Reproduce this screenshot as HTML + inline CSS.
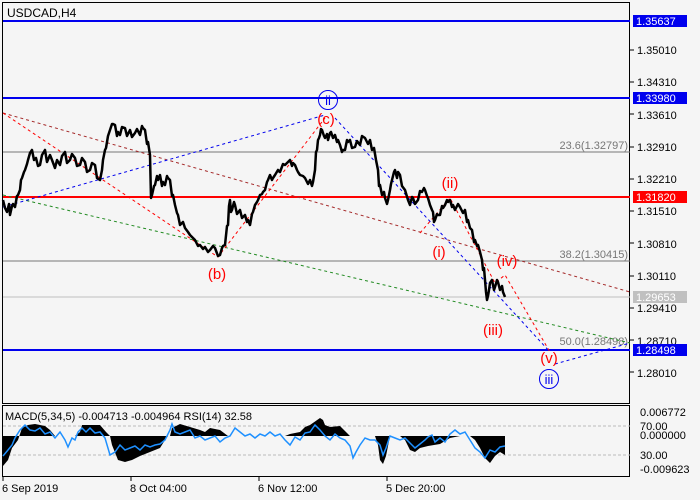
<!DOCTYPE html>
<html><head><meta charset="utf-8"><style>
html,body{margin:0;padding:0;background:#f5f5f5;width:700px;height:500px;overflow:hidden}
svg{display:block;font-family:"Liberation Sans",sans-serif}
</style></head><body>
<svg width="700" height="500" viewBox="0 0 700 500">
<rect x="0" y="0" width="700" height="500" fill="#f5f5f5"/>
<rect x="2.5" y="2.5" width="627" height="401" fill="#f5f5f5" stroke="#000" stroke-width="1"/>
<rect x="2.5" y="405.5" width="627" height="71" fill="#f5f5f5" stroke="#000" stroke-width="1"/>
<text x="7" y="17" font-size="12" fill="#000">USDCAD,H4</text>

<line x1="3" y1="21" x2="630" y2="21" stroke="#0000ee" stroke-width="2"/>
<line x1="3" y1="98" x2="630" y2="98" stroke="#0000ee" stroke-width="2"/>
<line x1="3" y1="152" x2="630" y2="152" stroke="#777" stroke-width="1"/>
<line x1="3" y1="197" x2="630" y2="197" stroke="#ff0000" stroke-width="2"/>
<line x1="3" y1="261" x2="630" y2="261" stroke="#777" stroke-width="1"/>
<line x1="3" y1="297" x2="630" y2="297" stroke="#c0c0c0" stroke-width="1"/>
<line x1="3" y1="350" x2="630" y2="350" stroke="#0000ee" stroke-width="2"/>
<text x="628" y="149" font-size="11" fill="#777" text-anchor="end">23.6(1.32797)</text>
<text x="628" y="258" font-size="11" fill="#777" text-anchor="end">38.2(1.30415)</text>
<text x="628" y="345" font-size="11" fill="#777" text-anchor="end">50.0(1.28498)</text>

<g fill="none" stroke-width="1" stroke-dasharray="3,3">
<polyline points="3,113 630,292" stroke="#a52a2a"/>
<polyline points="3,195 630,343" stroke="#228b22"/>
<polyline points="3,207 325,115" stroke="#0000ee"/>
<polyline points="335,118 550,352" stroke="#0000ee"/>
<polyline points="555,364 630,343" stroke="#0000ee"/>
<polyline points="3,113 218,257 325,118" stroke="#ff0000"/>
<polyline points="420,233 450,198 495,283 505,275 550,352" stroke="#ff0000"/>
</g>

<polyline fill="none" stroke="#000" stroke-width="2.5" stroke-linejoin="round" points="3,200 5,208 7,212 9,204 10,215 12,206 13,204 15,207 17,196 18,195 20,190 21,180 22,178 24,172 25,170 27,164 28,160 30,153 32,150 34,160 36,158 38,166 40,165 42,155 45,150 47,162 50,155 52,160 55,168 57,160 60,165 62,156 65,152 67,163 70,160 72,154 75,158 77,166 80,165 82,158 85,162 87,172 90,170 92,163 95,165 97,178 100,180 102,170 103,160 105,150 106,148 108,136 110,130 112,124 113,124 115,125 117,136 118,132 120,135 122,127 125,128 127,136 130,130 132,137 135,133 137,129 140,135 142,126 143,128 145,130 147,144 148,142 150,155 151,198 152,195 154,186 155,185 157,176 158,180 160,175 162,186 163,182 165,185 167,176 168,178 170,180 172,196 173,195 175,205 177,213 178,215 180,225 183,222 185,228 188,232 190,235 193,238 195,240 198,246 200,245 203,249 205,247 208,252 210,250 213,246 215,248 218,256 220,255 222,248 223,246 225,245 227,226 228,225 229,206 230,200 231,212 232,210 234,202 235,205 237,214 240,210 242,218 245,215 247,222 248,220 250,225 252,214 253,212 255,205 257,202 258,200 260,195 262,194 263,192 265,190 267,182 268,180 270,175 272,180 273,178 275,175 278,170 280,172 283,164 285,165 288,162 290,160 292,166 293,163 295,165 297,170 298,172 300,175 303,176 305,178 308,184 310,180 312,186 313,182 315,170 316,152 317,150 318,140 319,138 320,135 321,129 322,130 324,136 325,138 327,134 328,140 330,133 331,132 333,138 335,135 337,142 338,140 340,145 342,152 343,150 345,150 347,140 348,142 350,140 352,148 355,147 357,141 360,145 362,136 365,138 368,144 370,140 372,150 374,148 376,160 378,170 379,186 380,185 382,195 384,192 385,198 387,204 388,200 390,190 391,184 392,180 394,172 395,170 397,178 398,172 400,175 402,186 405,190 408,200 410,205 412,197 413,198 415,204 418,200 420,191 422,192 424,188 425,190 427,196 428,198 430,205 432,210 433,212 434,222 435,220 437,214 438,215 440,215 442,206 443,208 445,205 447,200 448,202 450,200 452,207 453,205 455,210 458,204 460,207 463,213 465,210 467,222 468,220 470,228 472,230 474,242 475,240 477,246 478,245 480,252 481,256 482,260 483,270 484,268 485,280 486,292 487,300 488,296 489,290 490,283 492,280 494,290 495,287 497,280 498,282 500,290 502,286 503,292 505,297"/>

<g font-size="15" fill="#ff0000" text-anchor="middle">
<text x="217" y="279">(b)</text>
<text x="326" y="124">(c)</text>
<text x="450" y="188">(ii)</text>
<text x="439" y="257">(i)</text>
<text x="507" y="266">(iv)</text>
<text x="493" y="335">(iii)</text>
<text x="549" y="363">(v)</text>
</g>
<circle cx="328" cy="100" r="9.5" fill="none" stroke="#0000ee" stroke-width="1"/>
<text x="328" y="105" font-size="13" fill="#0000ee" text-anchor="middle">ii</text>
<circle cx="549" cy="379" r="9.5" fill="none" stroke="#0000ee" stroke-width="1"/>
<text x="549" y="384" font-size="13" fill="#0000ee" text-anchor="middle">iii</text>

<g font-size="11" fill="#000">
<line x1="630" y1="50" x2="634" y2="50" stroke="#000"/><text x="637" y="54">1.35010</text>
<line x1="630" y1="82" x2="634" y2="82" stroke="#000"/><text x="637" y="86">1.34310</text>
<line x1="630" y1="114" x2="634" y2="114" stroke="#000"/><text x="637" y="119">1.33610</text>
<line x1="630" y1="147" x2="634" y2="147" stroke="#000"/><text x="637" y="151">1.32910</text>
<line x1="630" y1="179" x2="634" y2="179" stroke="#000"/><text x="637" y="183">1.32210</text>
<line x1="630" y1="211" x2="634" y2="211" stroke="#000"/><text x="637" y="215">1.31510</text>
<line x1="630" y1="243" x2="634" y2="243" stroke="#000"/><text x="637" y="248">1.30810</text>
<line x1="630" y1="276" x2="634" y2="276" stroke="#000"/><text x="637" y="280">1.30110</text>
<line x1="630" y1="308" x2="634" y2="308" stroke="#000"/><text x="637" y="312">1.29410</text>
<line x1="630" y1="340" x2="634" y2="340" stroke="#000"/><text x="637" y="345">1.28710</text>
<line x1="630" y1="372" x2="634" y2="372" stroke="#000"/><text x="637" y="377">1.28010</text>
</g>
<g font-size="11" fill="#fff">
<rect x="633" y="15" width="54" height="12" fill="#0000ee"/><text x="636" y="25">1.35637</text>
<rect x="633" y="92" width="54" height="12" fill="#0000ee"/><text x="636" y="102">1.33980</text>
<rect x="633" y="191" width="54" height="12" fill="#ff0000"/><text x="636" y="201">1.31820</text>
<rect x="633" y="291" width="54" height="12" fill="#c0c0c0"/><text x="636" y="301">1.29653</text>
<rect x="633" y="344" width="54" height="12" fill="#0000ee"/><text x="636" y="354">1.28498</text>
</g>

<line x1="3" y1="426" x2="630" y2="426" stroke="#bbb" stroke-dasharray="3,2"/>
<line x1="3" y1="455" x2="630" y2="455" stroke="#bbb" stroke-dasharray="3,2"/>
<polygon fill="#000" points="3,436 3,466 8,460 12,448 18,440 22,428 28,425 35,424 45,426 50,430 55,436 60,436 75,436 80,432 82,425 100,425 106,432 110,436 112,445 118,460 125,462 132,460 140,456 150,452 160,448 165,440 168,436 170,436 172,428 180,424 200,430 205,432 210,428 220,430 228,436 240,436 245,436 248,436 250,436 255,436 260,436 268,436 270,436 278,436 285,436 290,434 300,432 305,427 310,425 320,418 323,420 325,425 330,427 340,426 347,433 350,436 360,436 365,436 370,436 375,436 378,445 380,460 383,464 386,456 390,436 392,436 396,436 400,436 405,440 410,450 415,452 420,448 428,446 440,444 450,438 460,436 470,436 475,440 480,448 485,458 490,463 495,456 500,452 505,455 505,436 3,436"/>
<polyline fill="none" stroke="#1e90ff" stroke-width="1.5" points="3,456 8,450 12,445 15,438 20,430 25,425 30,430 35,431 40,428 45,434 50,432 55,438 60,432 65,440 68,447 72,438 75,440 78,432 82,428 86,432 90,428 95,433 100,432 105,438 110,455 115,452 120,445 125,450 130,448 135,446 140,450 145,445 150,447 155,445 160,444 165,440 170,430 172,424 175,432 180,434 185,432 190,430 195,438 200,436 205,440 210,438 215,436 220,442 225,438 230,436 235,428 240,432 245,436 250,434 255,438 260,434 265,436 270,432 275,436 280,434 285,440 290,445 295,437 300,440 305,433 310,432 315,425 320,430 325,436 330,440 335,434 340,438 345,440 350,446 353,458 356,452 360,445 365,438 370,440 375,440 380,445 383,455 386,448 390,436 395,438 400,440 405,438 410,443 415,448 420,444 425,440 428,437 432,435 435,442 440,438 445,442 450,434 455,430 460,434 465,432 470,440 475,448 480,452 485,458 490,450 495,452 500,447 505,446"/>
<text x="5" y="420" font-size="11" fill="#000">MACD(5,34,5) -0.004713 -0.004964 RSI(14) 32.58</text>
<g font-size="11" fill="#000">
<text x="640" y="416">0.006772</text>
<text x="640" y="430">70.00</text>
<text x="640" y="439">0.000000</text>
<text x="640" y="459">30.00</text>
<text x="640" y="473">-0.009623</text>
</g>

<g stroke="#000"><line x1="3" y1="477" x2="3" y2="481"/><line x1="131" y1="477" x2="131" y2="481"/><line x1="259" y1="477" x2="259" y2="481"/><line x1="387" y1="477" x2="387" y2="481"/></g>
<g font-size="11" fill="#000">
<text x="2" y="492">6 Sep 2019</text>
<text x="130" y="492">8 Oct 04:00</text>
<text x="258" y="492">6 Nov 12:00</text>
<text x="386" y="492">5 Dec 20:00</text>
</g>
</svg>
</body></html>
